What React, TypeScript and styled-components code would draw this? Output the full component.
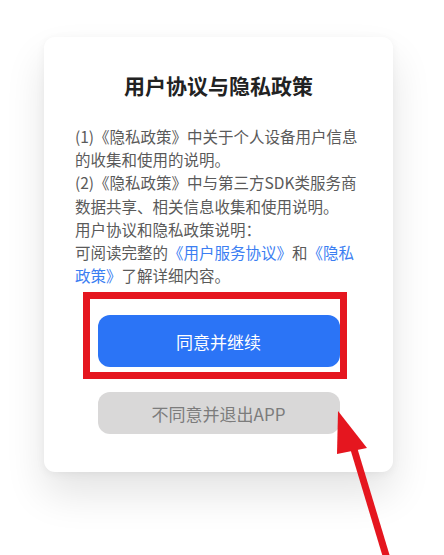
import styled, { createGlobalStyle } from 'styled-components';

const GlobalStyle = createGlobalStyle`
  html, body {
    margin: 0;
    padding: 0;
    background: #ffffff;
  }
  body {
    font-family: "Noto Sans CJK SC", "Noto Sans", sans-serif;
  }
`

const Page = styled.div`
  position: relative;
  width: 444px;
  height: 555px;
  overflow: hidden;
  padding: 37px 0 0 44px;
  box-sizing: border-box;
  background: #ffffff;
`

const Card = styled.div`
  width: 349px;
  height: 435px;
  box-sizing: border-box;
  padding: 34px 31px 0 31px;
  background: #ffffff;
  border-radius: 11px;
  box-shadow: 0 22px 40px rgba(0, 0, 0, 0.11), 0 2px 10px rgba(0, 0, 0, 0.05);
  display: flex;
  flex-direction: column;
  align-items: center;
`

const Title = styled.h2`
  margin: 0;
  font-size: 21px;
  line-height: 28px;
  font-weight: 700;
  color: #222222;
  text-align: center;
`

const Body = styled.div`
  margin-top: 26px;
  align-self: stretch;
  font-size: 15.5px;
  line-height: 23.2px;
  color: #5a5a5a;
`

const Para = styled.p`
  margin: 0;
`

const DocLink = styled.span`
  color: #3b7ef2;
`

const Actions = styled.div`
  margin-top: 28px;
  display: flex;
  flex-direction: column;
  align-items: center;
  gap: 25px;
`

const ButtonSlot = styled.div`
  position: relative;
`

const Button = styled.button<{ $variant: 'primary' | 'muted' }>`
  display: flex;
  align-items: center;
  justify-content: center;
  width: 242px;
  height: ${p => (p.$variant === 'primary' ? '52px' : '42px')};
  border: none;
  border-radius: 12px;
  font-family: "Noto Sans CJK SC", "Noto Sans", sans-serif;
  font-size: 17px;
  background: ${p => (p.$variant === 'primary' ? '#2b74f6' : '#d9d8d8')};
  color: ${p => (p.$variant === 'primary' ? '#ffffff' : '#7c7c7c')};
`

const Highlight = styled.div`
  position: absolute;
  left: -15px;
  top: -23px;
  right: -7px;
  bottom: -12px;
  border: 7px solid #e5161f;
  pointer-events: none;
`

const ArrowLayer = styled.svg`
  position: absolute;
  left: 0;
  top: 0;
  pointer-events: none;
`

export default function App() {
    return <Page>
        <GlobalStyle />
        <Card>
            <Title>用户协议与隐私政策</Title>
            <Body>
                <Para>(1)《隐私政策》中关于个人设备用户信息的收集和使用的说明。</Para>
                <Para>(2)《隐私政策》中与第三方SDK类服务商数据共享、相关信息收集和使用说明。</Para>
                <Para>用户协议和隐私政策说明：</Para>
                <Para>可阅读完整的<DocLink>《用户服务协议》</DocLink>和<DocLink>《隐私政策》</DocLink>了解详细内容。</Para>
            </Body>
            <Actions>
                <ButtonSlot>
                    <Button $variant="primary">同意并继续</Button>
                    <Highlight />
                </ButtonSlot>
                <Button $variant="muted">不同意并退出APP</Button>
            </Actions>
        </Card>
        <ArrowLayer width="444" height="555" viewBox="0 0 444 555">
            <line x1="353" y1="446" x2="388" y2="562" stroke="#e5161f" strokeWidth="7" />
            <polygon points="338,411 337,454 367,448" fill="#e5161f" />
        </ArrowLayer>
    </Page>
}
